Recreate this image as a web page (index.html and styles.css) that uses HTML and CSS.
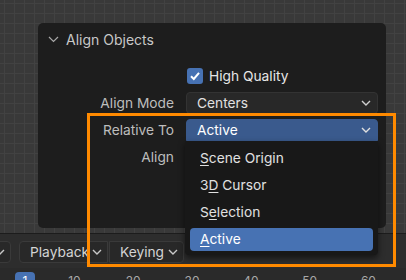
FILE: index.html
```html
<!DOCTYPE html>
<html lang="en">
<head>
    <meta charset="UTF-8">
    <meta name="viewport" content="width=device-width, initial-scale=1.0">
    <title>Align Objects</title>
    <link rel="stylesheet" href="styles.css">
</head>
<body>
    <div class="viewport">
        <div class="panel">
            <div class="panel-head">
                <svg class="chev-head" width="11" height="7" viewBox="0 0 11 7"><path d="M1 1 L5.5 5.5 L10 1" fill="none" stroke="#a8a8a8" stroke-width="1.2"/></svg>
                <span class="panel-title">Align Objects</span>
            </div>
            <div class="props">
                <div class="label"></div>
                <div class="check-row">
                    <span class="checkbox">
                        <svg width="12" height="12" viewBox="0 0 12 12"><path d="M2 6.3 L4.8 9 L10 2.8" fill="none" stroke="#fff" stroke-width="2"/></svg>
                    </span>
                    <span class="check-text">High Quality</span>
                </div>

                <div class="label">Align Mode</div>
                <div class="select">
                    <span>Centers</span>
                    <svg width="10" height="6" viewBox="0 0 10 6"><path d="M1 1 L5 5 L9 1" fill="none" stroke="#d0d0d0" stroke-width="1.4"/></svg>
                </div>

                <div class="label">Relative To</div>
                <div class="select open">
                    <span>Active</span>
                    <svg width="10" height="6" viewBox="0 0 10 6"><path d="M1 1 L5 5 L9 1" fill="none" stroke="#e0e0e0" stroke-width="1.4"/></svg>
                </div>

                <div class="label">Align</div>
                <div></div>
            </div>
        </div>
    </div>

    <div class="tl-header">
        <div class="tl-btn first">
            <svg width="10" height="6" viewBox="0 0 10 6"><path d="M1 1 L5 5 L9 1" fill="none" stroke="#c8c8c8" stroke-width="1.4"/></svg>
        </div>
        <div class="tl-btn playback">
            <span>Playback</span>
            <svg width="10" height="6" viewBox="0 0 10 6"><path d="M1 1 L5 5 L9 1" fill="none" stroke="#c8c8c8" stroke-width="1.4"/></svg>
        </div>
        <div class="tl-btn keying">
            <span>Keying</span>
            <svg width="10" height="6" viewBox="0 0 10 6"><path d="M1 1 L5 5 L9 1" fill="none" stroke="#c8c8c8" stroke-width="1.4"/></svg>
        </div>
    </div>

    <div class="ruler">
        <span class="frame-current">1</span>
        <span class="frame">10</span>
        <span class="frame">20</span>
        <span class="frame">30</span>
        <span class="frame">40</span>
        <span class="frame">50</span>
        <span class="frame">60</span>
    </div>

    <div class="menu">
        <div class="menu-item"><u>S</u>cene Origin</div>
        <div class="menu-item">3<u>D</u> Cursor</div>
        <div class="menu-item">S<u>e</u>lection</div>
        <div class="menu-item active"><u>A</u>ctive</div>
    </div>

    <div class="highlight"></div>
</body>
</html>
```

FILE: styles.css
```css
* {
    margin: 0;
    padding: 0;
    box-sizing: border-box;
}

body {
    width: 406px;
    height: 280px;
    overflow: hidden;
    position: relative;
    font-family: 'Inter', 'DejaVu Sans', sans-serif;
    font-size: 13.75px;
    color: #dcdcdc;
    background-color: #393939;
}

.viewport {
    height: 233px;
    padding: 23px 0 0 38px;
    background-color: #393939;
    background-image:
        linear-gradient(to right, #424242 1px, transparent 1px),
        linear-gradient(to bottom, #424242 1px, transparent 1px);
    background-size: 10px 10px;
    background-position: 4px 3px;
}

.panel {
    width: 348px;
    height: 205px;
    background-color: #1d1d1d;
    border-radius: 5px;
}

.panel-head {
    height: 32px;
    display: flex;
    align-items: center;
    padding-left: 10px;
    gap: 7px;
}

.panel-title {
    font-size: 14px;
    color: #c8c8c8;
}

.props {
    display: grid;
    grid-template-columns: 136px 192px;
    grid-auto-rows: 22px;
    column-gap: 12px;
    row-gap: 5px;
    padding-top: 10px;
}

.label {
    display: flex;
    align-items: center;
    justify-content: flex-end;
    color: #bdbdbd;
}

.check-row {
    display: flex;
    align-items: center;
    gap: 6px;
    padding-left: 1px;
}

.checkbox {
    width: 16px;
    height: 16px;
    border-radius: 3px;
    background-color: #4772b3;
    display: flex;
    align-items: center;
    justify-content: center;
}

.check-text {
    color: #e6e6e6;
}

.select {
    display: flex;
    align-items: center;
    justify-content: space-between;
    padding: 0 6px 0 10px;
    background-color: #282828;
    border: 1px solid #333;
    border-radius: 4px;
    color: #e0e0e0;
}

.select.open {
    background-color: #3a5a8d;
    border-color: #3a5a8d;
    border-radius: 4px 4px 0 0;
    color: #fff;
}

.tl-header {
    height: 35px;
    border-top: 1px solid #1c1c1c;
    background-color: #2d2d2d;
    display: flex;
    padding-top: 7px;
}

.tl-btn {
    height: 22px;
    display: flex;
    align-items: center;
    justify-content: space-between;
    padding: 0 5px 0 10px;
    background-color: #282828;
    border: 1px solid #3a3a3a;
    border-radius: 4px;
    color: #d4d4d4;
}

.tl-btn.first {
    width: 71px;
    margin-left: -60px;
    justify-content: flex-end;
}

.tl-btn.playback {
    width: 89px;
    margin-left: 8px;
    border-radius: 4px 0 0 4px;
}

.tl-btn.keying {
    width: 75px;
    margin-left: 1px;
    border-radius: 0 4px 4px 0;
}

.ruler {
    height: 12px;
    background-color: #2a2a2a;
    display: flex;
    align-items: flex-start;
    padding-top: 4px;
    color: #a8a8a8;
    font-size: 12px;
}

.frame-current {
    width: 20px;
    height: 18px;
    margin-left: 15px;
    margin-right: 10px;
    background-color: #4772b3;
    border-radius: 4px;
    color: #fff;
    text-align: center;
    line-height: 18px;
}

.frame {
    width: 58.8px;
    text-align: center;
    line-height: 18px;
}

/* dropdown list of the open select */
.menu {
    position: absolute;
    left: 185px;
    top: 141px;
    width: 193px;
    height: 114px;
    padding: 6px 5px 4px;
    background-color: #181818;
    border-radius: 0 0 4px 4px;
    box-shadow: 0 3px 6px rgba(0, 0, 0, 0.55);
    display: flex;
    flex-direction: column;
    gap: 4px;
}

.menu-item {
    height: 23px;
    line-height: 23px;
    padding-left: 10px;
    color: #e0e0e0;
    border-radius: 4px;
}

.menu-item.active {
    background-color: #4772b3;
    color: #fff;
}

.menu-item u {
    text-underline-offset: 2px;
}

.highlight {
    position: absolute;
    left: 87px;
    top: 113px;
    width: 309px;
    height: 154px;
    border: 3px solid #ff8a00;
}
```
